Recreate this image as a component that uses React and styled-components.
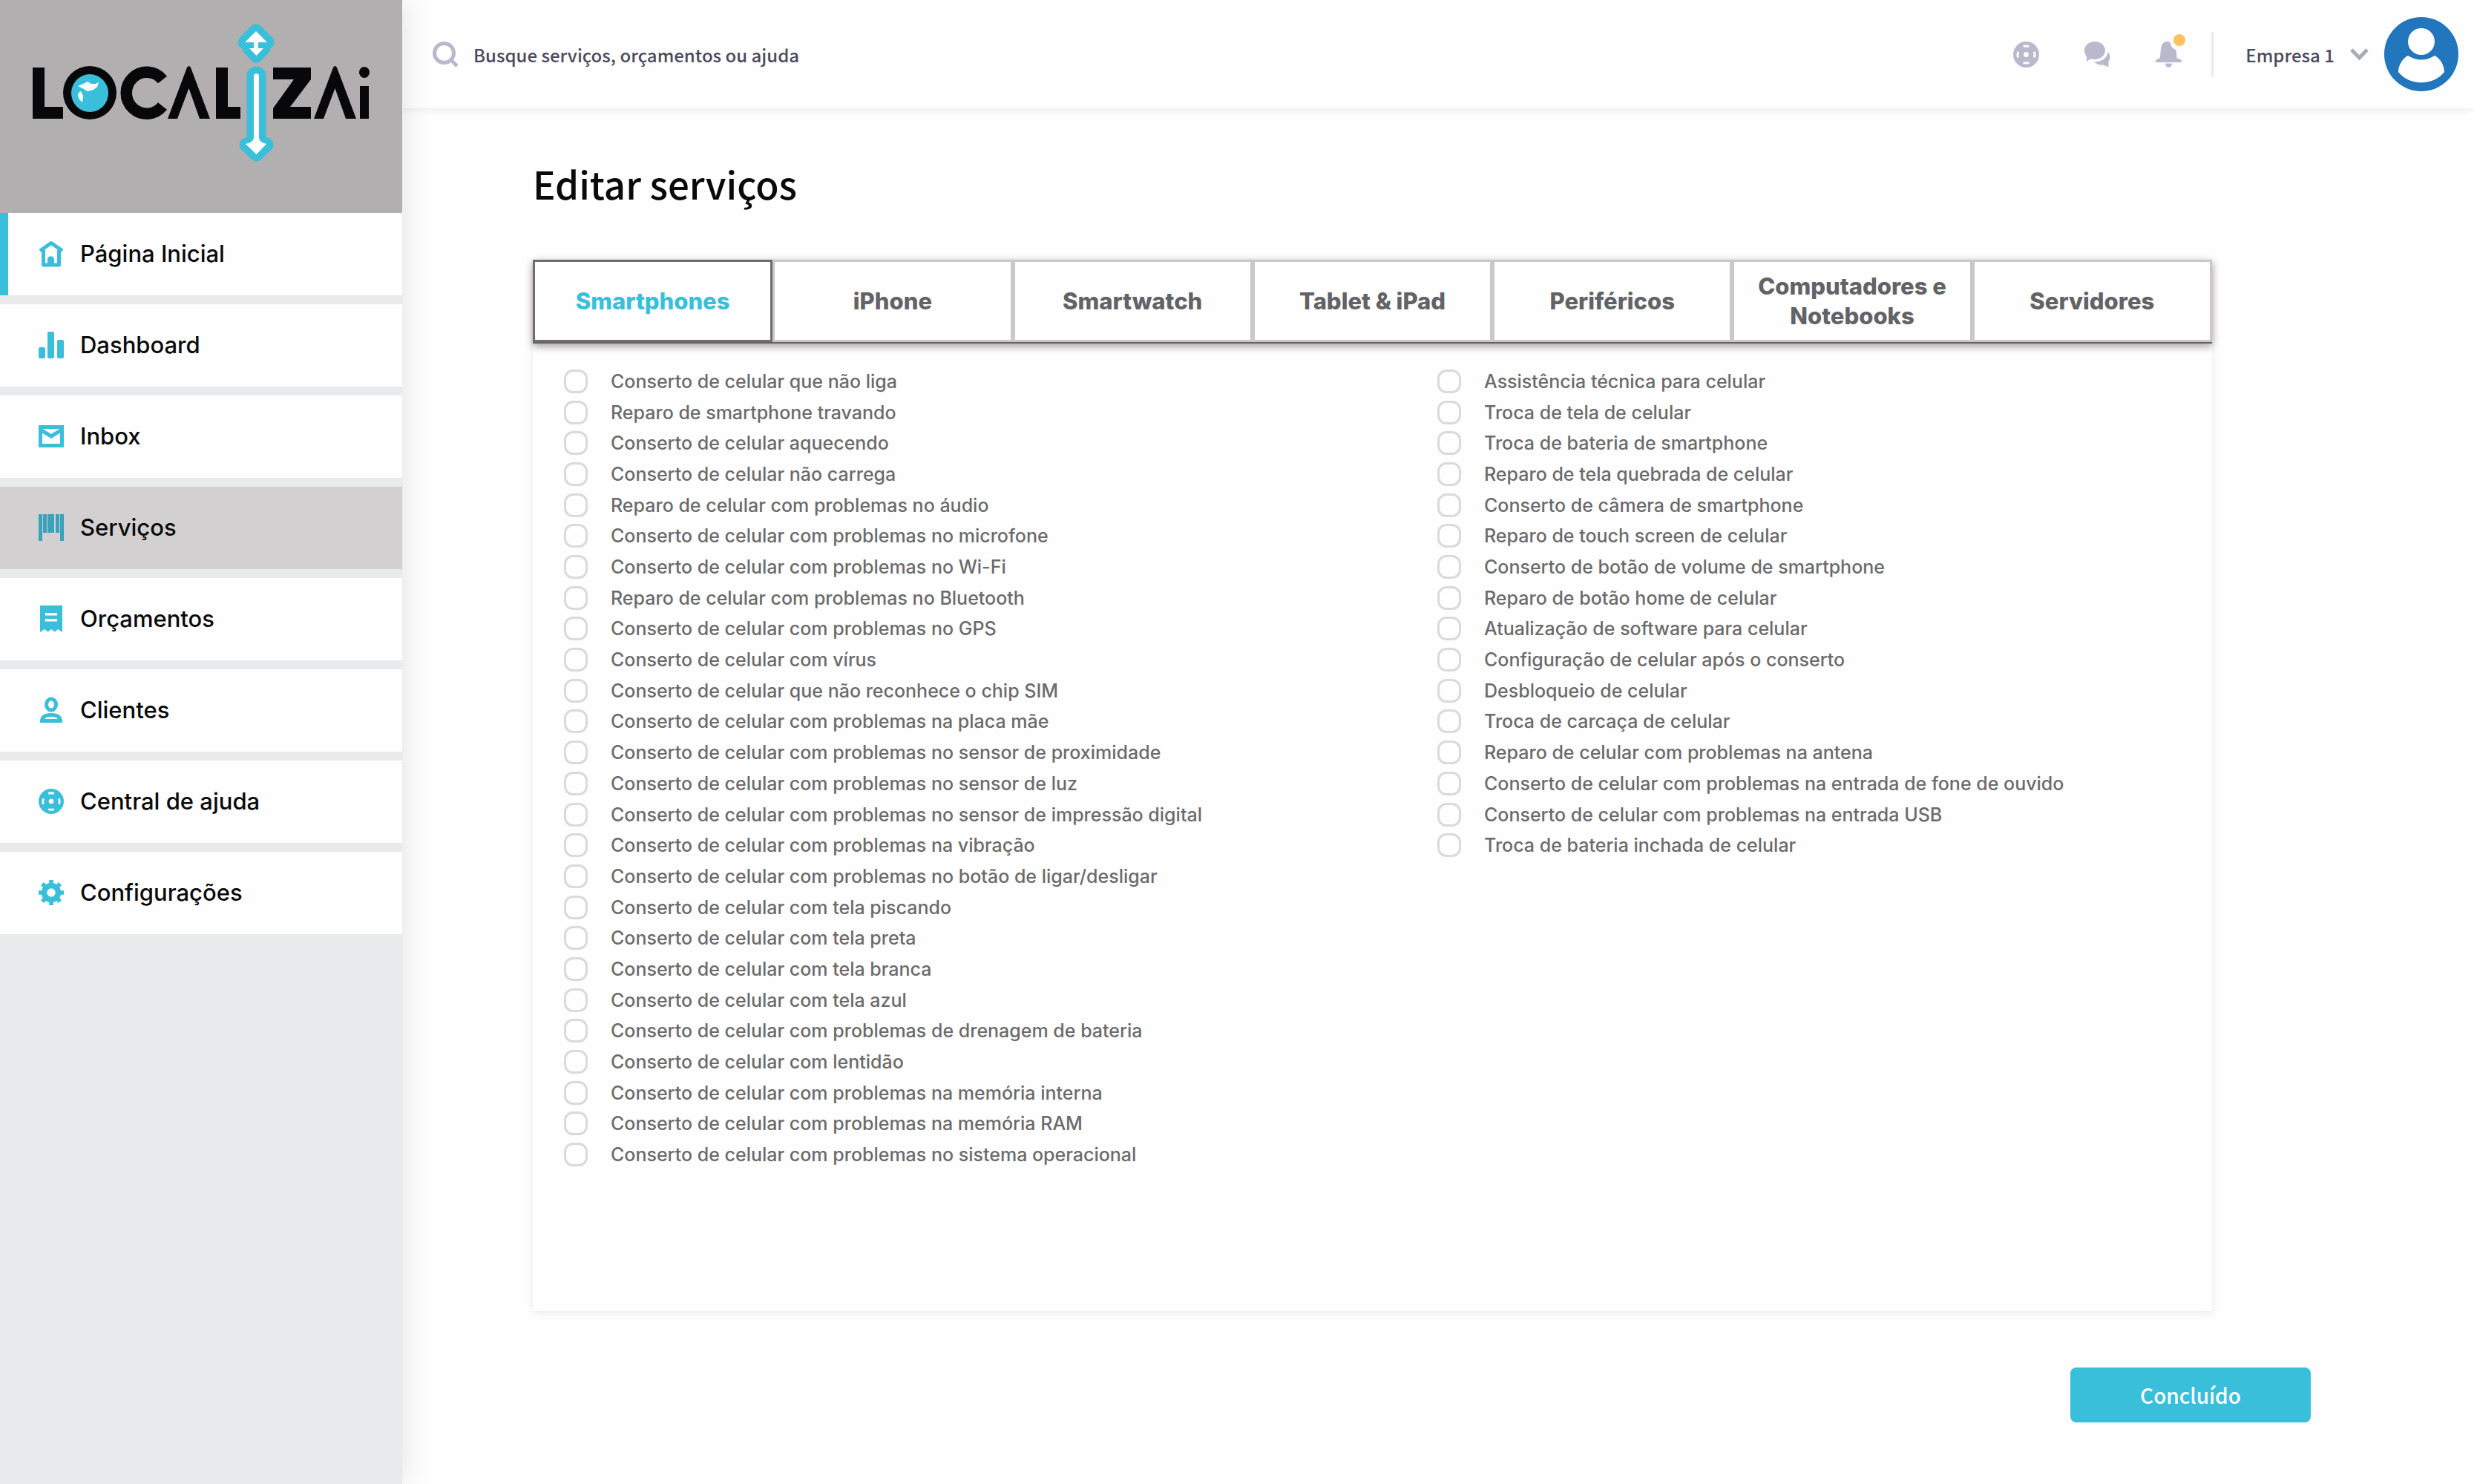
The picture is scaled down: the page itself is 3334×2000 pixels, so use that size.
import React, { useState } from "react";
import styled, { createGlobalStyle } from "styled-components";

const inter = `Inter, "Liberation Sans", sans-serif`;
const source = `"Noto Sans CJK SC", "Noto Sans", sans-serif`;
const cyan = "#3abfdb";

const GlobalStyle = createGlobalStyle`
  * { box-sizing: border-box; }
  body { margin: 0; background: #fefefe; color: #0a0a0a; font-family: ${inter}; }
  button, input { font: inherit; }
  ul { list-style: none; margin: 0; padding: 0; }
`;

const Shell = styled.div`
  display: flex;
  min-height: 100vh;
`;

const Sidebar = styled.aside`
  flex: 0 0 542px;
  background: #e9eaec;
  box-shadow: 0 0 40px rgba(0, 0, 0, 0.12);
  z-index: 1;
`;

const Brand = styled.a`
  display: block;
  height: 287px;
  background: #b1afb0;
  svg { display: block; width: 100%; height: 100%; }
`;

const NavList = styled.ul`
  display: grid;
  gap: 12px;
`;

const NavLink = styled.a`
  display: flex;
  align-items: center;
  gap: 22px;
  height: 111px;
  padding: 0 0 2px 41px;
  border-left: 11px solid ${(p) => (p.$home ? cyan : "transparent")};
  background: ${(p) => (p.$selected ? "#d2d0d1" : "#fefefe")};
  color: #0a0a0a;
  font-size: 31px;
  font-weight: 450;
  line-height: 40px;
  text-decoration: none;
  svg { width: 34px; height: 36px; flex: none; color: ${(p) => (p.$selected ? "#3aa3b9" : cyan)}; }
`;

const Page = styled.div`
  flex: 1;
  min-width: 0;
`;

const Header = styled.header`
  display: flex;
  align-items: center;
  justify-content: space-between;
  height: 146px;
  padding: 0 21px 0 41px;
  box-shadow: 0 2px 10px rgba(0, 0, 0, 0.08);
  font-family: ${source};
  font-size: 24px;
  font-weight: 500;
  color: #4b4b5b;
`;

const Search = styled.label`
  display: flex;
  align-items: center;
  gap: 20px;
  svg { width: 35px; height: 35px; color: #bab8cc; }
`;

const SearchInput = styled.input`
  width: 600px;
  padding: 0;
  border: 0;
  outline: 0;
  background: transparent;
  color: inherit;
  &::placeholder { color: inherit; opacity: 1; }
`;

const Actions = styled.div`
  display: flex;
  align-items: center;
`;

const Tools = styled.div`
  display: flex;
  align-items: center;
  gap: 61px;
  height: 60px;
  padding-right: 40px;
  border-right: 3px solid #ebeaf2;
`;

const IconButton = styled.button`
  position: relative;
  display: block;
  padding: 0;
  border: 0;
  background: none;
  color: #bab8cc;
  svg { display: block; width: 35px; height: 35px; }
`;

const Dot = styled.span`
  position: absolute;
  top: -10px;
  right: -5px;
  width: 16px;
  height: 16px;
  border-radius: 50%;
  background: #ffc261;
`;

const Account = styled.button`
  display: flex;
  align-items: center;
  gap: 21px;
  padding: 0 0 0 43px;
  border: 0;
  background: none;
  color: inherit;
`;

const Chevron = styled.svg`
  width: 25px;
  height: 17px;
`;

const Avatar = styled.svg`
  width: 100px;
  height: 100px;
`;

const Main = styled.main`
  padding: 61px 220px 64px 176px;
`;

const Title = styled.h1`
  margin: 0 0 63px;
  font: 500 51px/80px ${source};
`;

const Card = styled.section`
  margin-right: 133px;
  min-height: 1417px;
  box-shadow: 0 3px 10px rgba(0, 0, 0, 0.08);
`;

const Tabs = styled.div`
  display: grid;
  grid-template-columns: repeat(7, 1fr);
  border-bottom: 2px solid #626262;
  box-shadow: 0 4px 10px rgba(40, 20, 30, 0.4);
`;

const Tab = styled.button`
  height: 111px;
  padding: 0 24px;
  border: 3px solid ${(p) => (p.$active ? "#6e6e6e" : "#c9c9c9")};
  background: #fefefe;
  color: ${(p) => (p.$active ? cyan : "#626366")};
  font-size: 31px;
  font-weight: 800;
  line-height: 40px;
`;

const Services = styled.ul`
  display: grid;
  grid-auto-flow: column;
  grid-template-rows: repeat(26, 1fr);
  grid-template-columns: 1177px 1fr;
  min-height: 1084px;
  margin: 30px 0 0 42px;
`;

const Service = styled.label`
  display: flex;
  align-items: center;
  gap: 31px;
  height: 100%;
  color: #6b6b6b;
  font-size: 25px;
  font-weight: 450;
  line-height: 32px;
`;

const Check = styled.input`
  appearance: none;
  flex: none;
  width: 32px;
  height: 32px;
  margin: 0;
  border: 3px solid #dadada;
  border-radius: 12px;
  background: #fefefe;
  &:checked { background: ${cyan}; }
`;

const Footer = styled.footer`
  display: flex;
  justify-content: flex-end;
  margin-top: 76px;
`;

const Done = styled.button`
  width: 324px;
  height: 74px;
  border: 0;
  border-radius: 8px;
  background: ${cyan};
  color: #fff;
  font: 500 28px/40px ${source};
`;

const HomeIcon = () => (
  <svg viewBox="0 0 34 36" fill="none" stroke="currentColor" strokeWidth="5">
    <path d="M2 14 17 3.500 32 14" strokeLinejoin="round" />
    <path d="M6.500 13V33H27.500V13" strokeLinejoin="round" />
    <path d="M12 32V24a5 5 0 0 1 9 0v8z" fill="currentColor" stroke="none" />
  </svg>
);
const BarsIcon = () => (
  <svg viewBox="0 0 34 36" fill="currentColor">
    <rect y="21" width="9" height="15" rx="2" />
    <rect x="12" width="9" height="36" rx="2" />
    <rect x="25" y="11" width="9" height="25" rx="2" />
  </svg>
);
const MailIcon = () => (
  <svg viewBox="0 0 34 36" fill="none" stroke="currentColor" strokeWidth="5">
    <rect x="2.500" y="5.500" width="29" height="25" />
    <path d="M4 10 17 18 30 10" />
  </svg>
);
const BarcodeIcon = () => (
  <svg viewBox="0 0 34 36" fill="currentColor">
    <path d="M0 0h5v36H0zM6 0h5v25H6zM12 0h9v25h-9zM23 0h5v25h-5zM29 0h5v36h-5z" />
  </svg>
);
const ReceiptIcon = () => (
  <svg viewBox="0 0 34 36" fill="currentColor" fillRule="evenodd">
    <path d="M3 0H31a1 1 0 0 1 1 1V36L26 32 22 35.500 17 32 12.500 35.500 8 32 2 36V1a1 1 0 0 1 1-1ZM9 10v3.500h16V10ZM9 18v3.500h16V18Z" />
  </svg>
);
const PersonIcon = () => (
  <svg viewBox="0 0 34 36" fill="none" stroke="currentColor" strokeWidth="5">
    <ellipse cx="17" cy="10.500" rx="6.500" ry="7.500" />
    <path d="M4.500 32.500C5 27 10 24.500 17 24.500S29 27 29.500 32.500Z" />
  </svg>
);
const HelpIcon = () => (
  <svg viewBox="0 0 36 36">
    <circle cx="18" cy="18" r="18" fill="currentColor" />
    <circle cx="18" cy="18" r="3.500" fill="#fefefe" />
    <g fill="none" stroke="#fefefe" strokeWidth="3">
      <path d="M14 6.800a12 12 0 0 1 8 0M14 29.200a12 12 0 0 0 8 0M6.800 14a12 12 0 0 0 0 8M29.200 14a12 12 0 0 1 0 8" />
    </g>
  </svg>
);
const GearIcon = () => (
  <svg viewBox="0 0 36 36" fill="none" stroke="currentColor">
    <circle cx="18" cy="18" r="10" strokeWidth="8" />
    {[0, 45, 90, 135].map((a) => (
      <path key={a} d="M18 0v7M18 29v7" strokeWidth="6" transform={`rotate(${a} 18 18)`} />
    ))}
  </svg>
);
const SearchIcon = () => (
  <svg viewBox="0 0 35 35" fill="none" stroke="currentColor" strokeWidth="5">
    <circle cx="15.500" cy="15.500" r="13" />
    <path d="M24.500 24.500 33 33" strokeWidth="5" />
  </svg>
);
const ChatIcon = () => (
  <svg viewBox="0 0 35 35" fill="currentColor">
    <path d="M14 0C22 0 28 5.500 28 12S22 24 14 24C12 24 10 23.700 8.500 23L3 27V20C1 18 0 15 0 12 0 5.500 6 0 14 0Z" />
    <path d="M31.500 14C35 17.500 35.500 23 32.500 26.500V34.500L25 31.500C20 32 16 30 13 27.500 22 27.500 31 23 31.500 14Z" />
  </svg>
);
const BellIcon = () => (
  <svg viewBox="0 0 35 35" fill="currentColor">
    <path d="M16 0C18 0 19 1 20 2 20 6 23 9.500 27 11 28.500 14 28 18 28.500 22 29.500 24 35 23 35 26.500 35 27.500 34.500 28 33.500 28H1.500C.5 28 0 27.500 0 26.500 0 23 5.500 24 6 21 7.500 14 5 0 16 0ZM13 29.500h9c0 7-9 7-9 0Z" />
  </svg>
);

const Logo = () => (
  <svg viewBox="0 0 542 287" role="img" aria-label="Localizai">
    <g fill="#08080a">
      <path d="M44 91h16v53h25v16H44zM291 91h16v53h17v16h-33zM368 91h51v16l-28 37h28v16h-51v-14l28-39h-28zM485 116h12v44h-12z" />
      <path d="M226 160 252 91q2.500-4 5 0L283 160H269L254.500 119 239 160zM423 160 449 91q2.500-4 5 0L480 160H466L451.500 119 436 160z" />
      <ellipse cx="491" cy="97.500" rx="7" ry="7.500" />
      <ellipse cx="121" cy="125" rx="36" ry="36" />
    </g>
    <path d="M219 107.500A27.500 28 0 1 0 219 143" fill="none" stroke="#08080a" strokeWidth="15.500" />
    <ellipse cx="121" cy="125.500" rx="25" ry="25.500" fill={cyan} />
    <path d="M105 116l7-3 6-3 5 3 6 0 4-2-2 6-5 4-8 2-5-3zM106 125l3-2 3 6-1 9-4-4-2-5z" fill="#fff" />
    <g stroke={cyan} strokeWidth="19" strokeLinejoin="round" fill={cyan}>
      <path d="M345 42 360 57H348V65H355L345.500 75 336 65H342V57H330Z" />
      <path d="M342 101q3.500-4 7 0V191L359 195 345.500 208 332 195 342 191Z" />
    </g>
    <path fill="#fff" d="M345 42 360 57H348V65H355L345.500 75 336 65H342V57H330ZM342 101q3.500-4 7 0V186q1 6 10 8L345.500 208 331 194q10-2 11-8Z" />
  </svg>
);

const nav = [
  ["Página Inicial", HomeIcon],
  ["Dashboard", BarsIcon],
  ["Inbox", MailIcon],
  ["Serviços", BarcodeIcon],
  ["Orçamentos", ReceiptIcon],
  ["Clientes", PersonIcon],
  ["Central de ajuda", HelpIcon],
  ["Configurações", GearIcon],
];

const tabs = ["Smartphones", "iPhone", "Smartwatch", "Tablet & iPad", "Periféricos", "Computadores e Notebooks", "Servidores"];

const services = [
  "Conserto de celular que não liga",
  "Reparo de smartphone travando",
  "Conserto de celular aquecendo",
  "Conserto de celular não carrega",
  "Reparo de celular com problemas no áudio",
  "Conserto de celular com problemas no microfone",
  "Conserto de celular com problemas no Wi-Fi",
  "Reparo de celular com problemas no Bluetooth",
  "Conserto de celular com problemas no GPS",
  "Conserto de celular com vírus",
  "Conserto de celular que não reconhece o chip SIM",
  "Conserto de celular com problemas na placa mãe",
  "Conserto de celular com problemas no sensor de proximidade",
  "Conserto de celular com problemas no sensor de luz",
  "Conserto de celular com problemas no sensor de impressão digital",
  "Conserto de celular com problemas na vibração",
  "Conserto de celular com problemas no botão de ligar/desligar",
  "Conserto de celular com tela piscando",
  "Conserto de celular com tela preta",
  "Conserto de celular com tela branca",
  "Conserto de celular com tela azul",
  "Conserto de celular com problemas de drenagem de bateria",
  "Conserto de celular com lentidão",
  "Conserto de celular com problemas na memória interna",
  "Conserto de celular com problemas na memória RAM",
  "Conserto de celular com problemas no sistema operacional",
  "Assistência técnica para celular",
  "Troca de tela de celular",
  "Troca de bateria de smartphone",
  "Reparo de tela quebrada de celular",
  "Conserto de câmera de smartphone",
  "Reparo de touch screen de celular",
  "Conserto de botão de volume de smartphone",
  "Reparo de botão home de celular",
  "Atualização de software para celular",
  "Configuração de celular após o conserto",
  "Desbloqueio de celular",
  "Troca de carcaça de celular",
  "Reparo de celular com problemas na antena",
  "Conserto de celular com problemas na entrada de fone de ouvido",
  "Conserto de celular com problemas na entrada USB",
  "Troca de bateria inchada de celular",
];

export default function App() {
  const [active, setActive] = useState(0);
  return (
    <>
      <GlobalStyle />
      <Shell>
        <Sidebar>
          <Brand href="#"><Logo /></Brand>
          <nav>
            <NavList>
              {nav.map(([label, Icon], i) => (
                <li key={label}>
                  <NavLink href="#" $home={i === 0} $selected={i === 3}>
                    <Icon />
                    {label}
                  </NavLink>
                </li>
              ))}
            </NavList>
          </nav>
        </Sidebar>
        <Page>
          <Header>
            <Search>
              <SearchIcon />
              <SearchInput type="search" aria-label="Busca" placeholder="Busque serviços, orçamentos ou ajuda" />
            </Search>
            <Actions>
              <Tools>
                <IconButton aria-label="Ajuda"><HelpIcon /></IconButton>
                <IconButton aria-label="Mensagens"><ChatIcon /></IconButton>
                <IconButton aria-label="Notificações"><BellIcon /><Dot /></IconButton>
              </Tools>
              <Account>
                Empresa 1
                <Chevron viewBox="0 0 25 17" fill="none" stroke="#a3aeb5" strokeWidth="5"><path d="M2 2 12.500 13 23 2" /></Chevron>
                <Avatar viewBox="0 0 100 100">
                  <circle cx="50" cy="50" r="50" fill="#2176bd" />
                  <circle cx="50" cy="33" r="18" fill="#fff" />
                  <path d="M32 52Q50 63 68 52C76 56 81 66 81 74 66 93 34 93 19 74 19 66 24 56 32 52Z" fill="#fff" />
                </Avatar>
              </Account>
            </Actions>
          </Header>
          <Main>
            <Title>Editar serviços</Title>
            <Card>
              <Tabs role="tablist">
                {tabs.map((t, i) => (
                  <Tab key={t} role="tab" aria-selected={i === active} $active={i === active} onClick={() => setActive(i)}>{t}</Tab>
                ))}
              </Tabs>
              <Services>
                {services.map((s) => (
                  <li key={s}><Service><Check type="checkbox" />{s}</Service></li>
                ))}
              </Services>
            </Card>
            <Footer><Done>Concluído</Done></Footer>
          </Main>
        </Page>
      </Shell>
    </>
  );
}
